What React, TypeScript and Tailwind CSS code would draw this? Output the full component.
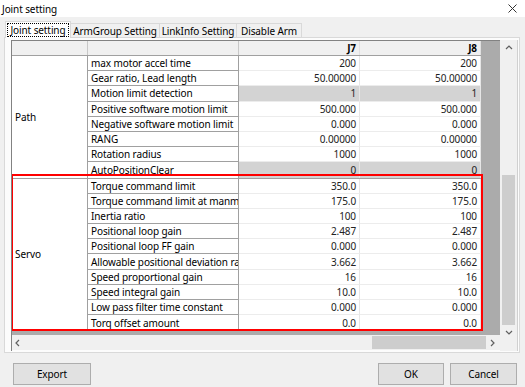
import React from "react";

type Row = { name: string; j7: string; j8: string; gray?: boolean };

const pathRows: Row[] = [
  { name: "max motor accel time", j7: "200", j8: "200" },
  { name: "Gear ratio, Lead length", j7: "50.00000", j8: "50.00000" },
  { name: "Motion limit detection", j7: "1", j8: "1", gray: true },
  { name: "Positive software motion limit", j7: "500.000", j8: "500.000" },
  { name: "Negative software motion limit", j7: "0.000", j8: "0.000" },
  { name: "RANG", j7: "0.00000", j8: "0.00000" },
  { name: "Rotation radius", j7: "1000", j8: "1000" },
  { name: "AutoPositionClear", j7: "0", j8: "0", gray: true },
];

const servoRows: Row[] = [
  { name: "Torque command limit", j7: "350.0", j8: "350.0" },
  { name: "Torque command limit at manmode", j7: "175.0", j8: "175.0" },
  { name: "Inertia ratio", j7: "100", j8: "100" },
  { name: "Positional loop gain", j7: "2.487", j8: "2.487" },
  { name: "Positional loop FF gain", j7: "0.000", j8: "0.000" },
  { name: "Allowable positional deviation range", j7: "3.662", j8: "3.662" },
  { name: "Speed proportional gain", j7: "16", j8: "16" },
  { name: "Speed integral gain", j7: "10.0", j8: "10.0" },
  { name: "Low pass filter time constant", j7: "0.000", j8: "0.000" },
  { name: "Torq offset amount", j7: "0.0", j8: "0.0" },
];

const tabs = [
  { label: "Joint setting", w: "w-[66px]" },
  { label: "ArmGroup Setting", w: "w-[89px]" },
  { label: "LinkInfo Setting", w: "w-[77px]" },
  { label: "Disable Arm", w: "w-[65px]" },
];

function Chevron({ dir }: { dir: "up" | "down" | "left" | "right" }) {
  const d = {
    up: "M1 5 L4 2 L7 5",
    down: "M1 2 L4 5 L7 2",
    left: "M5 1 L2 4 L5 7",
    right: "M2 1 L5 4 L2 7",
  }[dir];
  return (
    <svg width="8" height="8" viewBox="0 0 8 8">
      <path d={d} fill="none" stroke="#606060" strokeWidth="1.2" />
    </svg>
  );
}

function Group({ label, rows }: { label: string; rows: Row[] }) {
  return (
    <div className="flex border-b border-[#a0a0a0]">
      <div className="w-[76px] border-r border-[#a0a0a0] flex items-center pl-[3px] bg-white">
        {label}
      </div>
      <div className="flex flex-col">
        {rows.map((r, i) => (
          <div key={r.name} className="flex h-[15.2px]">
            <div
              className={
                "w-[151px] border-r border-[#a0a0a0] pl-[3px] whitespace-nowrap overflow-hidden flex items-center bg-white " +
                (i < rows.length - 1 ? "border-b" : "")
              }
            >
              {r.name}
            </div>
            <div
              className={
                "w-[121px] border-r border-[#e6e6e6] pr-[3px] flex items-center justify-end text-[#222] " +
                (r.gray ? "bg-[#d3d3d3] " : "bg-white ") +
                (i < rows.length - 1 ? "border-b border-b-[#ececec]" : "")
              }
            >
              {r.j7}
            </div>
            <div
              className={
                "w-[121px] border-r border-[#e6e6e6] pr-[3px] flex items-center justify-end text-[#222] " +
                (r.gray ? "bg-[#d3d3d3] " : "bg-white ") +
                (i < rows.length - 1 ? "border-b border-b-[#ececec]" : "")
              }
            >
              {r.j8}
            </div>
          </div>
        ))}
      </div>
    </div>
  );
}

export default function App() {
  return (
    <div
      className="w-[525px] h-[387px] bg-[#f0f0f0] overflow-hidden text-[10px] tracking-[-0.1px] text-black leading-none"
      style={{ fontFamily: '"Noto Sans", "Open Sans", sans-serif' }}
    >
      <div className="h-[17px] bg-white flex items-center justify-between pl-[2px] pr-[8px]">
        <span>Joint setting</span>
        <svg width="9" height="9" viewBox="0 0 9 9">
          <path d="M0.5 0.5 L8.5 8.5 M8.5 0.5 L0.5 8.5" stroke="#333" strokeWidth="1" />
        </svg>
      </div>

      <div className="flex items-end h-[20px] pl-[5px]">
        {tabs.map((t, i) =>
          i === 0 ? (
            <div
              key={t.label}
              className={t.w + " h-[17px] bg-white border border-b-0 border-[#d9d9d9] flex items-center justify-center -mb-px relative z-10"}
            >
              <span className="border border-dotted border-black px-[2px] py-[1px]">{t.label}</span>
            </div>
          ) : (
            <div
              key={t.label}
              className={t.w + " h-[14px] bg-[#f0f0f0] border-r border-t border-[#d9d9d9] flex items-center justify-center"}
            >
              {t.label}
            </div>
          )
        )}
      </div>

      <div className="ml-[4px] w-[516px] h-[316px] border border-[#d9d9d9] bg-[#fcfcfc] pt-[2px] pl-[6px]">
        <div className="flex h-[311px] w-[507px]">
          <div className="flex flex-col w-[489px] border-l border-[#828282]">
            <div className="relative h-[295px] bg-[#ababab] overflow-hidden border-t border-[#828282]">
              <div className="flex h-[15px] border-b border-[#a0a0a0] bg-[#f0f0f0] w-[469px]">
                <div className="w-[76px] border-r border-[#c8c8c8]" />
                <div className="w-[151px] border-r border-[#c8c8c8]" />
                <div className="w-[121px] border-r border-[#e0e0e0] flex items-center justify-end pr-[3px] font-bold">J7</div>
                <div className="w-[121px] border-r border-[#e0e0e0] flex items-center justify-end pr-[3px] font-bold">J8</div>
              </div>
              <div className="w-[469px]">
                <Group label="Path" rows={pathRows} />
                <Group label="Servo" rows={servoRows} />
              </div>
              <div className="absolute left-[-1px] top-[133px] w-[472px] h-[157px] border-2 border-[#ff0000]" />
            </div>
            <div className="h-[15px] bg-[#f0f0f0] flex items-center">
              <div className="w-[12px] flex justify-center">
                <Chevron dir="left" />
              </div>
              <div className="flex-1 h-full relative">
                <div className="absolute left-[348px] top-[1px] w-[114px] h-[13px] bg-[#cdcdcd]" />
              </div>
              <div className="w-[14px] flex justify-center">
                <Chevron dir="right" />
              </div>
            </div>
          </div>
          <div className="w-[18px] bg-[#f0f0f0] flex flex-col border-r border-[#d0d0d0]">
            <div className="h-[15px] flex items-center justify-center">
              <Chevron dir="up" />
            </div>
            <div className="flex-1 relative">
              <div className="absolute left-[2px] top-[120px] w-[13px] h-[150px] bg-[#cdcdcd]" />
            </div>
            <div className="h-[24px] flex items-start justify-center pt-[2px]">
              <Chevron dir="down" />
            </div>
          </div>
        </div>
      </div>

      <div className="flex items-start mt-[10px] pl-[13px] pr-[8px]">
        <button className="w-[78px] h-[22px] bg-[#e1e1e1] border border-[#adadad] text-[10px]">Export</button>
        <div className="flex-1" />
        <button className="w-[66px] h-[22px] bg-[#e1e1e1] border border-[#adadad] text-[10px]">OK</button>
        <button className="ml-[6px] w-[67px] h-[22px] bg-[#e1e1e1] border border-[#adadad] text-[10px]">Cancel</button>
      </div>
    </div>
  );
}
